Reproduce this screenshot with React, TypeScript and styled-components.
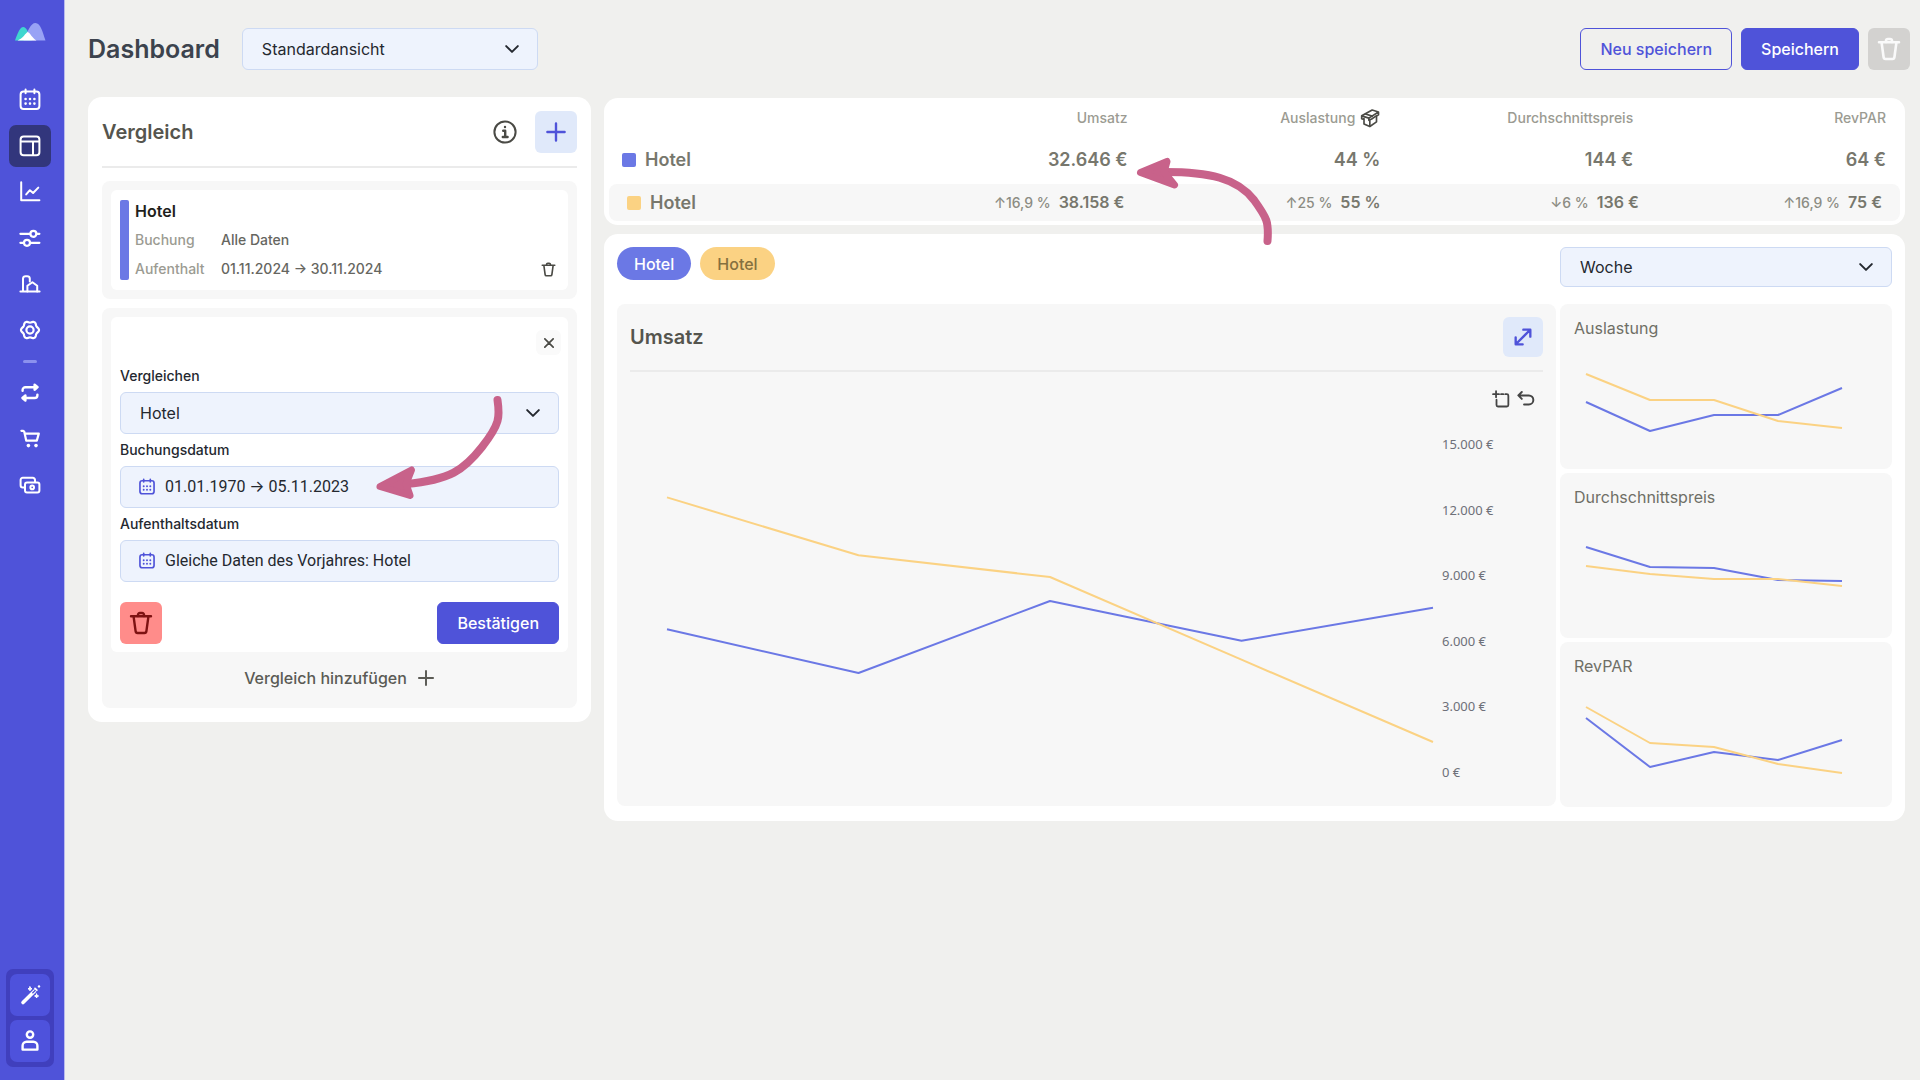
import React from "react";
import styled, { createGlobalStyle } from "styled-components";

const color = {
  brand: "#4f53d9",
  brandDark: "#32367c",
  page: "#f0f0ee",
  soft: "#f7f7f7",
  field: "#eef3fd",
  fieldBorder: "#cddaf3",
  tint: "#e0e9fa",
  text: "#24282f",
  textMuted: "#77776d",
  textFaint: "#9b9b92",
  heading: "#55554e",
  line: "#ebebeb",
  seriesA: "#6b78e5",
  seriesB: "#fbd283",
  marker: "#c8628a",
};

const GlobalStyle = createGlobalStyle`
  *, *::before, *::after { box-sizing: border-box; }
  body {
    margin: 0;
    background: ${color.page};
    color: ${color.text};
    font-family: Inter, "Liberation Sans", sans-serif;
    font-size: 16px;
    line-height: 20px;
  }
  button, select, input { font: inherit; color: inherit; margin: 0; }
  button { cursor: pointer; border: 0; }
  svg { display: block; flex: none; }
`;

/* ---------- icons ---------- */

const Icon = styled.svg.attrs({
  viewBox: "0 0 24 24",
  fill: "none",
  stroke: "currentColor",
  strokeLinecap: "round",
  strokeLinejoin: "round",
  "aria-hidden": true,
})<{ $size?: number; $weight?: number }>`
  width: ${(p) => p.$size ?? 24}px;
  height: ${(p) => p.$size ?? 24}px;
  stroke-width: ${(p) => p.$weight ?? 2};
`;

type IconProps = { size?: number; weight?: number };

const CalendarIcon = ({ size, weight }: IconProps) => (
  <Icon $size={size} $weight={weight}>
    <rect x="2.6" y="3.6" width="18.8" height="17.4" rx="3" />
    <path d="M7.6 1.6v3.6M16.4 1.6v3.6" />
    <path
      d="M7.6 11h.01M12 11h.01M16.4 11h.01M7.6 15.6h.01M12 15.6h.01M16.4 15.6h.01"
      strokeWidth={2.6}
    />
  </Icon>
);

const LayoutIcon = () => (
  <Icon>
    <rect x="2.6" y="2.4" width="18.8" height="18.8" rx="3" />
    <path d="M3 7.4h18M15 7.8v13" />
  </Icon>
);

const ChartIcon = () => (
  <Icon>
    <path d="M3.2 2.2v18h18.2" />
    <path d="M8.2 14.4l3.7-4.2 3.2 2.8 5.2-5.4" />
  </Icon>
);

const SlidersIcon = () => (
  <Icon $weight={2.2}>
    <path d="M2.4 7.8h9.8M18.6 7.8h2.8M2.4 16.8h3.2M12 16.8h9.4" />
    <circle cx="15.4" cy="7.8" r="3" />
    <circle cx="9" cy="16.8" r="3" />
  </Icon>
);

const BuildingIcon = () => (
  <Icon>
    <path d="M2.4 19.6h19.2M5 19.4V6.6a2.6 2.6 0 0 1 2.6-2.4h1.6a2.6 2.6 0 0 1 2.6 2.4v3" />
    <path d="M9.4 19.4v-5.6l5-3.6 4.8 3.6v5.6" />
  </Icon>
);

const gearOutline = Array.from({ length: 72 }, (_, i) => {
  const a = (i / 72) * Math.PI * 2;
  const r = 8.2 + 0.8 * Math.cos(6 * a);
  return `${(12 + r * Math.cos(a)).toFixed(2)} ${(12 + r * Math.sin(a)).toFixed(2)}`;
}).join("L");

const GearIcon = () => (
  <Icon $weight={2.2}>
    <path d={`M${gearOutline}Z`} />
    <circle cx="12" cy="12" r="3.6" />
  </Icon>
);

const RepeatIcon = () => (
  <Icon $weight={2.4}>
    <path d="M4.6 9.8V9a2.8 2.8 0 0 1 2.8-2.8h11.4M16.6 3.6l3 2.6-3 2.6z" />
    <path d="M19.4 13.6v.6a2.8 2.8 0 0 1-2.8 2.8H5.2M7.4 14.4l-3 2.6 3 2.6z" />
  </Icon>
);

const CartIcon = () => (
  <Icon $weight={2.2}>
    <path d="M3.4 3.8h1.8l1 .8 2 9h10.6l2-7H7" />
    <circle cx="10.4" cy="18.6" r="1.8" fill="currentColor" stroke="none" />
    <circle cx="18" cy="18.6" r="1.8" fill="currentColor" stroke="none" />
  </Icon>
);

const CashIcon = () => (
  <Icon>
    <rect x="7" y="9.4" width="14.4" height="10" rx="2" />
    <circle cx="14.2" cy="14.4" r="1.8" />
    <path d="M6.6 14.4H4.8A2.2 2.2 0 0 1 2.6 12.2V7a2.2 2.2 0 0 1 2.2-2.2h10A2.2 2.2 0 0 1 17 7v2" />
  </Icon>
);

const WandIcon = () => (
  <Icon>
    <path d="M5 19.6L16.4 8.2" strokeWidth={3.6} />
    <path d="M14.8 9.8l3.4-3.4" strokeWidth={1.4} stroke={color.brand} />
    <path d="M17 5.4l1.8 1.8" strokeWidth={1.8} />
    <path
      d="M12 3.8l.6 1.4 1.4.6-1.4.6-.6 1.4-.6-1.4-1.4-.6 1.4-.6zM18.6 11l.6 1.4 1.4.6-1.4.6-.6 1.4-.6-1.4-1.4-.6 1.4-.6z"
      strokeWidth={1}
      fill="currentColor"
    />
    <path d="M21 3.4h.01" strokeWidth={2.4} />
  </Icon>
);

const PersonIcon = () => (
  <Icon $weight={2.4}>
    <circle cx="12" cy="5.6" r="3.2" />
    <path d="M4.6 20.6v-3.8a4 4 0 0 1 4-4h6.800a4 4 0 0 1 4 4v3.800z" />
  </Icon>
);

const TrashIcon = ({ size, weight }: IconProps) => (
  <Icon $size={size} $weight={weight}>
    <path d="M2 5.2h20M4.6 5.6l2 14.6a2 2 0 0 0 2 1.8h6.8a2 2 0 0 0 2-1.8l2-14.6" />
    <path d="M9 5V3.8A1.8 1.8 0 0 1 10.8 2h2.4A1.8 1.8 0 0 1 15 3.8V5" />
  </Icon>
);

const InfoIcon = () => (
  <Icon>
    <circle cx="12" cy="12" r="10.6" />
    <path d="M10.2 10.8h2v6M9.8 17h4.8M12 7h.01" strokeWidth={2.4} />
  </Icon>
);

const PlusIcon = ({ size, weight }: IconProps) => (
  <Icon $size={size} $weight={weight}>
    <path d="M12 2.6v18.8M2.6 12h18.8" />
  </Icon>
);

const CloseIcon = () => (
  <Icon $size={10} $weight={4}>
    <path d="M2 2l20 20M22 2L2 22" />
  </Icon>
);

const ChevronIcon = () => (
  <Icon $size={14} $weight={3.4}>
    <path d="M2 7l10 10L22 7" />
  </Icon>
);

const BoxIcon = () => (
  <Icon $size={20} $weight={2}>
    <path d="M2 9.4L14.6 2.4l7.6 2.4-11.600 7.400zM2 9.400v3.400l2.800 1M4.800 12.800v6.400l7 3 8-5.600V9.600l2.400-1.400V4.800" />
    <path d="M10.600 12.200v2.600l3.400-1.600 5.600-3.800M11.800 15v7M6.600 7.200l8 2.600" />
  </Icon>
);

const ExpandIcon = () => (
  <Icon $size={20} $weight={2.8}>
    <path d="M3.6 20.4L20.4 3.6M12.4 3.2h8.4v8.4M3.2 12.4v8.4h8.4" />
  </Icon>
);

const SelectAreaIcon = () => (
  <Icon $size={18} $weight={2.4}>
    <path d="M5.4 1.6v8M1.4 5.6h8M12 5.6h3M17.6 5.6h2.2a2 2 0 0 1 2 2V20a2 2 0 0 1-2 2H8a2 2 0 0 1-2-2v-7" />
  </Icon>
);

const UndoIcon = () => (
  <Icon $size={18} $weight={2.6}>
    <path d="M6.4 2.6L1.8 7.2l4.6 4.6M2.2 7.2h13.6a6 6 0 0 1 0 12H9.4" />
  </Icon>
);

const Logo = () => (
  <svg width="31" height="18" viewBox="0 0 31 18" role="img" aria-label="Logo">
    <path d="M0 17.5C3 9.5 5 4 8.2 4c3.2 0 5 5 8.6 13.5z" fill="#3fd6cf" />
    <path d="M8.5 17.5C13 8 15.5 0 20.500 0S27.500 8.500 30.500 17.500z" fill="#98a2f5" />
    <path d="M2.500 17.500C8 15.500 10.500 10 12.800 9c3 1.500 4.200 6 8.700 8.500z" fill="#fff" />
  </svg>
);

/* ---------- shell ---------- */

const Shell = styled.div`
  display: flex;
  min-height: 100vh;
`;

const Sidebar = styled.aside`
  display: flex;
  flex-direction: column;
  flex: none;
  width: 65px;
  padding: 23px 10px 13px 6px;
  background: ${color.brand};
  border-right: 1px solid #b9baee;
  color: #fff;
`;

const LogoLink = styled.a`
  display: flex;
  justify-content: center;
  height: 18px;
  margin-bottom: 38px;
`;

const Nav = styled.nav`
  display: flex;
  flex-direction: column;
  align-items: center;
  gap: 4px;
`;

const NavLink = styled.a<{ $active?: boolean }>`
  display: flex;
  align-items: center;
  justify-content: center;
  width: 42px;
  height: 42px;
  border-radius: 7px;
  color: inherit;
  background: ${(p) => (p.$active ? color.brandDark : "transparent")};
`;

const NavRule = styled.hr`
  width: 14px;
  height: 3px;
  margin: 5px 0;
  border: 0;
  border-radius: 2px;
  background: #8b91ee;
`;

const NavFooter = styled.div`
  display: flex;
  flex-direction: column;
  gap: 4px;
  margin-top: auto;
  padding: 5px 4px;
  border-radius: 7px;
  background: #403fbd;
`;

const FooterButton = styled.button`
  display: flex;
  align-items: center;
  justify-content: center;
  height: 42px;
  padding: 0;
  border-radius: 7px;
  background: #4e52dc;
  color: #fff;
`;

const Main = styled.main`
  display: flex;
  flex-direction: column;
  flex: 1;
  min-width: 0;
  gap: 27px;
  padding: 28px 0 28px 23px;
`;

const Header = styled.header`
  display: flex;
  align-items: center;
  gap: 9px;
  padding-right: 10px;
`;

const PageTitle = styled.h1`
  margin: 0 13px 0 0;
  font-size: 25px;
  line-height: 32px;
  font-weight: 600;
  color: #3c434d;
`;

const Spacer = styled.div`
  flex: 1;
`;

const Button = styled.button<{ $outline?: boolean }>`
  height: 42px;
  padding: 0 19px;
  border: 1px solid ${color.brand};
  border-radius: 6px;
  background: ${(p) => (p.$outline ? "transparent" : color.brand)};
  color: ${(p) => (p.$outline ? color.brand : "#fff")};
  font-weight: 500;
`;

const tones = {
  tint: { bg: color.tint, fg: color.brand },
  danger: { bg: "#ff8c8a", fg: "#7d1212" },
  disabled: { bg: "#d3d2d0", fg: "#fafafa" },
  plain: { bg: "transparent", fg: "#4a4a45" },
  faint: { bg: "#fafafa", fg: "#4a4a45" },
};

const IconButton = styled.button<{ $tone: keyof typeof tones; $size?: number }>`
  display: flex;
  align-items: center;
  justify-content: center;
  flex: none;
  width: ${(p) => p.$size ?? 42}px;
  height: ${(p) => p.$size ?? 42}px;
  padding: 0;
  border-radius: 6px;
  background: ${(p) => tones[p.$tone].bg};
  color: ${(p) => tones[p.$tone].fg};
`;

/* ---------- fields ---------- */

const FieldBox = styled.div<{ $compact?: boolean }>`
  display: grid;
  align-items: center;
  height: ${(p) => (p.$compact ? 40 : 42)}px;
  border: 1px solid ${color.fieldBorder};
  border-radius: 6px;
  background: ${color.field};
`;

const NativeSelect = styled.select`
  grid-area: 1 / 1;
  width: 100%;
  height: 100%;
  padding: 0 19px;
  border: 0;
  border-radius: 6px;
  background: transparent;
  appearance: none;
`;

const SelectChevron = styled.span`
  grid-area: 1 / 1;
  justify-self: end;
  padding-right: 18px;
  pointer-events: none;
`;

const DateBox = styled(FieldBox)`
  grid-template-columns: auto 1fr;
  gap: 9px;
  padding: 0 17px;
  color: ${color.brand};
`;

const DateInput = styled.input`
  width: 100%;
  padding: 0;
  border: 0;
  background: transparent;
  font-family: Roboto, Inter, sans-serif;
  color: ${color.text};
`;

const FieldLabel = styled.label`
  font-size: 14px;
  font-weight: 500;
`;

type SelectProps = { id?: string; label?: string; value: string; compact?: boolean };

const Select = ({ id, label, value, compact }: SelectProps) => (
  <FieldBox $compact={compact}>
    <NativeSelect id={id} aria-label={label} defaultValue={value}>
      <option>{value}</option>
    </NativeSelect>
    <SelectChevron>
      <ChevronIcon />
    </SelectChevron>
  </FieldBox>
);

const ViewSelect = styled.div`
  width: 296px;
`;

/* ---------- comparison panel ---------- */

const Content = styled.div`
  display: flex;
  align-items: flex-start;
  gap: 13px;
  padding-right: 15px;
`;

const Card = styled.section`
  border-radius: 14px;
  background: #fff;
`;

const ComparePanel = styled(Card)`
  display: flex;
  flex-direction: column;
  flex: none;
  width: 503px;
  padding: 14px;
`;

const SectionHeader = styled.div`
  display: flex;
  align-items: center;
  gap: 9px;
  padding-bottom: 13px;
  border-bottom: 2px solid ${color.line};
`;

const SectionTitle = styled.h2`
  flex: 1;
  margin: 0;
  font-size: 20px;
  line-height: 24px;
  font-weight: 600;
  color: ${color.heading};
`;

const Group = styled.div`
  margin-top: 9px;
  padding: 9px;
  border-radius: 8px;
  background: ${color.soft};

  ${SectionHeader} + & {
    margin-top: 13px;
  }
`;

const Entry = styled.div`
  display: flex;
  gap: 6px;
  padding: 10px 9px;
  border-radius: 6px;
  background: #fff;
`;

const EntryBar = styled.span`
  width: 9px;
  border-radius: 2px;
  background: ${color.seriesA};
`;

const EntryBody = styled.div`
  display: grid;
  grid-template-columns: 86px 1fr auto;
  grid-auto-rows: 22px;
  row-gap: 7px;
  align-items: center;
  flex: 1;
  font-size: 14px;
  font-weight: 500;
  color: #66665f;
`;

const EntryName = styled.h3`
  grid-column: 1 / -1;
  margin: 0;
  font-size: 16px;
  font-weight: 600;
  color: #1f1f1d;
`;

const EntryLabel = styled.span`
  grid-column: 1;
  color: ${color.textFaint};
`;

const Form = styled.form`
  position: relative;
  display: flex;
  flex-direction: column;
  gap: 6px;
  padding: 13px 9px 8px;
  border-radius: 6px;
  background: #fff;
`;

const FormTop = styled.div`
  display: flex;
  justify-content: flex-end;
  margin: 0 -2px 5px;
`;

const FormActions = styled.div`
  display: flex;
  justify-content: space-between;
  margin-top: 14px;
`;

const AddButton = styled.button`
  display: flex;
  align-items: center;
  justify-content: center;
  gap: 10px;
  width: 100%;
  height: 47px;
  padding: 4px 0 0;
  background: transparent;
  color: #5b5b55;
  font-weight: 500;
`;

/* ---------- key figures ---------- */

const Results = styled.div`
  display: flex;
  flex-direction: column;
  flex: 1;
  min-width: 0;
  gap: 9px;
  padding-top: 1px;
`;

const FigureCard = styled(Card)`
  position: relative;
  padding: 0 5px 4px;
`;

const FigureTable = styled.table`
  display: block;
  font-weight: 600;
  color: ${color.textMuted};

  thead, tbody { display: block; }
`;

const HeadRow = styled.tr`
  display: grid;
  grid-template-columns: 2fr repeat(3, 1fr);
  height: 40px;
  padding: 0 14px 0 13px;
  align-items: center;
`;

const FigureRow = styled(HeadRow)`
  height: 46px;
  padding-bottom: 2px;
`;

const CompareRow = styled(HeadRow)`
  grid-template-columns: 497fr 256fr 258fr 243fr;
  height: 37px;
  padding: 0 18px;
  border-radius: 8px;
  background: ${color.soft};
`;

const ColumnHead = styled.th`
  display: flex;
  align-items: center;
  justify-content: flex-end;
  gap: 5px;
  padding: 0;
  font-size: 14px;
  font-weight: 500;
  color: ${color.textFaint};

  svg { color: #4a4a45; }
`;

const NameCell = styled.div`
  display: flex;
  align-items: center;
  gap: 9px;
  font-size: 18px;
  font-weight: 600;
`;

const Swatch = styled.span<{ $color: string }>`
  width: 14px;
  height: 14px;
  border-radius: 2px;
  background: ${(p) => p.$color};
`;

const RowHead = styled.th`
  display: flex;
  align-items: center;
  justify-content: space-between;
  padding: 0;
  font-weight: 600;
`;

const Cell = styled.td<{ $strong?: boolean }>`
  display: flex;
  align-items: baseline;
  justify-content: flex-end;
  gap: 8px;
  padding: 0;
  font-size: ${(p) => (p.$strong ? 18 : 16)}px;
`;

const Delta = styled.span`
  font-size: 14px;
  font-weight: 500;
  color: #8c8c83;
`;

/* ---------- charts ---------- */

const ChartCard = styled(Card)`
  display: grid;
  grid-template-columns: minmax(0, 939fr) minmax(0, 332fr);
  gap: 17px 4px;
  align-items: start;
  padding: 13px 13px 14px;
`;

const Pills = styled.div`
  display: flex;
  gap: 9px;
`;

const Pill = styled.button<{ $tone: "a" | "b" }>`
  height: 33px;
  padding: 0 17px;
  border-radius: 17px;
  background: ${(p) => (p.$tone === "a" ? color.seriesA : color.seriesB)};
  color: ${(p) => (p.$tone === "a" ? "#fff" : "#85703f")};
  font-weight: 500;
`;

const MainChart = styled.article`
  padding: 13px 13px 26px;
  border-radius: 8px;
  background: ${color.soft};
`;

const ChartTools = styled.div`
  display: flex;
  justify-content: flex-end;
  gap: 7px;
  padding: 18px 8px 0 0;
`;

const ToolButton = styled.button`
  padding: 0;
  background: transparent;
  color: #454545;
`;

const PlotRow = styled.div`
  display: flex;
  gap: 9px;
  height: 344px;
  padding-left: 37px;
  margin-top: 28px;
`;

const Plot = styled.svg`
  flex: 1;
  min-width: 0;
  height: 328px;
  margin-top: 8px;
  overflow: visible;
`;

const Axis = styled.ol`
  display: flex;
  flex-direction: column;
  justify-content: space-between;
  width: 101px;
  margin: 0;
  padding: 0;
  list-style: none;
  font-family: "Noto Sans", sans-serif;
  font-size: 13px;
  line-height: 16px;
  color: #6e7079;
`;

const SideCharts = styled.div`
  display: flex;
  flex-direction: column;
  gap: 4px;
`;

const MiniCard = styled.article`
  height: 165px;
  padding: 13px 14px 0;
  border-radius: 8px;
  background: ${color.soft};
`;

const MiniTitle = styled.h3`
  margin: 0;
  font-size: 16px;
  line-height: 23px;
  font-weight: 400;
  color: #6f6f66;
`;

const MiniPlotArea = styled.div`
  display: flex;
  padding: 0 36px 0 12px;
`;

const MiniPlot = styled.svg`
  flex: 1;
  min-width: 0;
  height: 115px;
  overflow: visible;
`;

const Line = styled.polyline`
  fill: none;
  stroke-width: 2px;
  stroke-linejoin: bevel;
  vector-effect: non-scaling-stroke;
`;

const toPoints = (values: number[], max: number) =>
  values.map((v, i) => `${i * 25},${((1 - v / max) * 100).toFixed(2)}`).join(" ");

type Series = { a: number[]; b: number[]; max: number };

const Lines = ({ a, b, max }: Series) => (
  <>
    <Line points={toPoints(a, max)} stroke={color.seriesA} />
    <Line points={toPoints(b, max)} stroke={color.seriesB} />
  </>
);

const revenue: Series = {
  a: [6526, 4527, 7820, 6005, 7514],
  b: [12560, 9910, 8918, 5136, 1372],
  max: 15000,
};

const miniCharts: { title: string; data: Series }[] = [
  {
    title: "Auslastung",
    data: { a: [53, 24, 40, 40, 67], b: [81, 55, 55, 34, 27], max: 115 },
  },
  {
    title: "Durchschnittspreis",
    data: { a: [77, 57, 56, 44, 43], b: [58, 50, 45, 45, 38], max: 115 },
  },
  {
    title: "RevPAR",
    data: { a: [75, 26, 41, 33, 53], b: [86, 50, 46, 29, 20], max: 115 },
  },
];

/* ---------- hand-drawn pointers ---------- */

const Pointer = styled.svg<{ $left: number; $top: number }>`
  position: absolute;
  left: ${(p) => p.$left}px;
  top: ${(p) => p.$top}px;
  width: 150px;
  height: 120px;
  z-index: 2;
  pointer-events: none;
  fill: none;
  stroke: ${color.marker};
  stroke-linecap: round;
  stroke-linejoin: round;
`;

const navMain = [
  { label: "Kalender", icon: <CalendarIcon /> },
  { label: "Dashboard", icon: <LayoutIcon />, active: true },
  { label: "Analyse", icon: <ChartIcon /> },
  { label: "Regler", icon: <SlidersIcon /> },
  { label: "Hotels", icon: <BuildingIcon /> },
  { label: "Einstellungen", icon: <GearIcon /> },
];

const navExtra = [
  { label: "Synchronisieren", icon: <RepeatIcon /> },
  { label: "Warenkorb", icon: <CartIcon /> },
  { label: "Zahlungen", icon: <CashIcon /> },
];

const AppSidebar = () => (
  <Sidebar>
    <LogoLink href="#" aria-label="Start">
      <Logo />
    </LogoLink>
    <Nav>
      {navMain.map((n) => (
        <NavLink key={n.label} href="#" aria-label={n.label} $active={n.active}>
          {n.icon}
        </NavLink>
      ))}
      <NavRule />
      {navExtra.map((n) => (
        <NavLink key={n.label} href="#" aria-label={n.label}>
          {n.icon}
        </NavLink>
      ))}
    </Nav>
    <NavFooter>
      <FooterButton aria-label="Assistent">
        <WandIcon />
      </FooterButton>
      <FooterButton aria-label="Konto">
        <PersonIcon />
      </FooterButton>
    </NavFooter>
  </Sidebar>
);

const Comparison = () => (
  <ComparePanel>
    <SectionHeader>
      <SectionTitle>Vergleich</SectionTitle>
      <IconButton $tone="plain" aria-label="Info">
        <InfoIcon />
      </IconButton>
      <IconButton $tone="tint" aria-label="Hinzufügen">
        <PlusIcon size={22} weight={2.6} />
      </IconButton>
    </SectionHeader>

    <Group>
      <Entry>
        <EntryBar />
        <EntryBody>
          <EntryName>Hotel</EntryName>
          <EntryLabel>Buchung</EntryLabel>
          <span>Alle Daten</span>
          <EntryLabel>Aufenthalt</EntryLabel>
          <span>01.11.2024 → 30.11.2024</span>
          <IconButton $tone="plain" $size={22} aria-label="Hotel löschen" type="button">
            <TrashIcon size={15} weight={2.6} />
          </IconButton>
        </EntryBody>
      </Entry>
    </Group>

    <Group>
      <Form onSubmit={(e) => e.preventDefault()}>
        <FormTop>
          <IconButton $tone="faint" $size={25} aria-label="Schließen" type="button">
            <CloseIcon />
          </IconButton>
        </FormTop>
        <FieldLabel htmlFor="compare">Vergleichen</FieldLabel>
        <Select id="compare" value="Hotel" />
        <FieldLabel htmlFor="booking">Buchungsdatum</FieldLabel>
        <DateBox>
          <CalendarIcon size={18} weight={2.2} />
          <DateInput id="booking" defaultValue="01.01.1970 → 05.11.2023" />
        </DateBox>
        <FieldLabel htmlFor="stay">Aufenthaltsdatum</FieldLabel>
        <DateBox>
          <CalendarIcon size={18} weight={2.2} />
          <DateInput id="stay" defaultValue="Gleiche Daten des Vorjahres: Hotel" />
        </DateBox>
        <FormActions>
          <IconButton $tone="danger" aria-label="Löschen" type="button">
            <TrashIcon size={24} weight={2.4} />
          </IconButton>
          <Button type="submit">Bestätigen</Button>
        </FormActions>
        <Pointer $left={259} $top={73} viewBox="0 0 150 120" aria-hidden>
          <path d="M127.5 10C130 27 130 34 112 57C94 80 80 90 36 94" strokeWidth={8} />
          <path d="M10 96.5L41.5 80L36 94L40 105.5Z" strokeWidth={7} fill={color.marker} />
        </Pointer>
      </Form>
      <AddButton type="button">
        Vergleich hinzufügen
        <PlusIcon size={18} weight={2.6} />
      </AddButton>
    </Group>
  </ComparePanel>
);

const Figures = () => (
  <FigureCard>
    <FigureTable>
      <thead>
        <HeadRow>
          <ColumnHead scope="col">Umsatz</ColumnHead>
          <ColumnHead scope="col">
            Auslastung
            <BoxIcon />
          </ColumnHead>
          <ColumnHead scope="col">Durchschnittspreis</ColumnHead>
          <ColumnHead scope="col">RevPAR</ColumnHead>
        </HeadRow>
      </thead>
      <tbody>
        <FigureRow>
          <RowHead scope="row">
            <NameCell>
              <Swatch $color={color.seriesA} />
              Hotel
            </NameCell>
            <Cell as="span" $strong>32.646 €</Cell>
          </RowHead>
          <Cell $strong>44 %</Cell>
          <Cell $strong>144 €</Cell>
          <Cell $strong>64 €</Cell>
        </FigureRow>
        <CompareRow>
          <RowHead scope="row">
            <NameCell>
              <Swatch $color={color.seriesB} />
              Hotel
            </NameCell>
            <Cell as="span">
              <Delta>↑16,9 %</Delta>38.158 €
            </Cell>
          </RowHead>
          <Cell>
            <Delta>↑25 %</Delta>55 %
          </Cell>
          <Cell>
            <Delta>↓6 %</Delta>136 €
          </Cell>
          <Cell>
            <Delta>↑16,9 %</Delta>75 €
          </Cell>
        </CompareRow>
      </tbody>
    </FigureTable>
    <Pointer $left={525} $top={52} viewBox="0 0 150 120" aria-hidden>
      <path d="M138.5 91C140 72 138 68 125 50C108 28 80 22 36 22" strokeWidth={8} />
      <path d="M11.5 22.5L38 11.5L35 22L45.5 35Z" strokeWidth={7} fill={color.marker} />
    </Pointer>
  </FigureCard>
);

const Charts = () => (
  <ChartCard>
    <Pills>
      <Pill $tone="a">Hotel</Pill>
      <Pill $tone="b">Hotel</Pill>
    </Pills>
    <Select label="Zeitraum" value="Woche" compact />
    <MainChart>
      <SectionHeader>
        <SectionTitle>Umsatz</SectionTitle>
        <IconButton $tone="tint" $size={40} aria-label="Vergrößern">
          <ExpandIcon />
        </IconButton>
      </SectionHeader>
      <ChartTools>
        <ToolButton aria-label="Bereich wählen">
          <SelectAreaIcon />
        </ToolButton>
        <ToolButton aria-label="Zurücksetzen">
          <UndoIcon />
        </ToolButton>
      </ChartTools>
      <PlotRow>
        <Plot viewBox="0 0 100 100" preserveAspectRatio="none" role="img" aria-label="Umsatz">
          <Lines {...revenue} />
        </Plot>
        <Axis>
          {["15.000 €", "12.000 €", "9.000 €", "6.000 €", "3.000 €", "0 €"].map((t) => (
            <li key={t}>{t}</li>
          ))}
        </Axis>
      </PlotRow>
    </MainChart>
    <SideCharts>
      {miniCharts.map((c) => (
        <MiniCard key={c.title}>
          <MiniTitle>{c.title}</MiniTitle>
          <MiniPlotArea>
            <MiniPlot viewBox="0 0 100 100" preserveAspectRatio="none" role="img" aria-label={c.title}>
              <Lines {...c.data} />
            </MiniPlot>
          </MiniPlotArea>
        </MiniCard>
      ))}
    </SideCharts>
  </ChartCard>
);

export default function App() {
  return (
    <>
      <GlobalStyle />
      <Shell>
        <AppSidebar />
        <Main>
          <Header>
            <PageTitle>Dashboard</PageTitle>
            <ViewSelect>
              <Select label="Ansicht" value="Standardansicht" />
            </ViewSelect>
            <Spacer />
            <Button $outline>Neu speichern</Button>
            <Button>Speichern</Button>
            <IconButton $tone="disabled" aria-label="Ansicht löschen">
              <TrashIcon size={24} weight={2.6} />
            </IconButton>
          </Header>
          <Content>
            <Comparison />
            <Results>
              <Figures />
              <Charts />
            </Results>
          </Content>
        </Main>
      </Shell>
    </>
  );
}
